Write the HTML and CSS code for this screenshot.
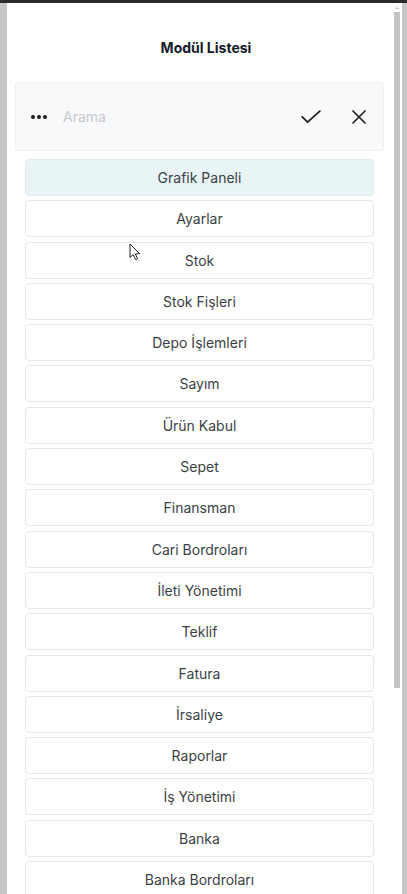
FILE: index.html
```html
<!DOCTYPE html>
<html lang="tr">
<head>
<meta charset="utf-8">
<title>Modül Listesi</title>
<link rel="stylesheet" href="styles.css">
</head>
<body>
<div class="topbar"></div>
<div class="frame">
  <div class="panel">
    <main class="content">
      <h1 class="title">Modül Listesi</h1>
      <div class="search">
        <span class="dots"><i></i><i></i><i></i></span>
        <span class="placeholder">Arama</span>
        <svg class="icon-check" width="20" height="14" viewBox="0 0 20 14"><path d="M1.2 6.8 L6.6 12.2 L18.8 1.2" fill="none" stroke="#222" stroke-width="1.8" stroke-linecap="round" stroke-linejoin="round"/></svg>
        <svg class="icon-x" width="14" height="14" viewBox="0 0 14 14"><path d="M1 1 L13 13 M13 1 L1 13" fill="none" stroke="#222" stroke-width="1.7" stroke-linecap="round"/></svg>
      </div>
      <ul class="list">
        <li class="item active">Grafik Paneli</li>
        <li class="item">Ayarlar</li>
        <li class="item">Stok</li>
        <li class="item">Stok Fişleri</li>
        <li class="item">Depo İşlemleri</li>
        <li class="item">Sayım</li>
        <li class="item">Ürün Kabul</li>
        <li class="item">Sepet</li>
        <li class="item">Finansman</li>
        <li class="item">Cari Bordroları</li>
        <li class="item">İleti Yönetimi</li>
        <li class="item">Teklif</li>
        <li class="item">Fatura</li>
        <li class="item">İrsaliye</li>
        <li class="item">Raporlar</li>
        <li class="item">İş Yönetimi</li>
        <li class="item">Banka</li>
        <li class="item">Banka Bordroları</li>
      </ul>
    </main>
    <div class="scrolltrack">
      <span class="arrow"></span>
      <span class="thumb"></span>
    </div>
  </div>
</div>
<svg class="cursor" width="12" height="18" viewBox="0 0 12 18"><path d="M1 1 L1 14.5 L4.2 11.6 L6.6 16.6 L8.6 15.7 L6.3 10.9 L10.6 10.7 Z" fill="#fff" stroke="#222" stroke-width="1" stroke-linejoin="round"/></svg>
</body>
</html>
```
FILE: styles.css
```css
html, body {
  margin: 0;
  padding: 0;
  height: 894px;
  overflow: hidden;
}
body {
  background: #c6c6c6;
  font-family: Inter, "Noto Sans", "Liberation Sans", sans-serif;
  position: relative;
}
.topbar {
  height: 3px;
  background: #2a2a2a;
}
.frame {
  display: flex;
  height: 891px;
}
.panel {
  flex: 1;
  margin-left: 7px;
  margin-right: 5px;
  background: #fff;
  display: flex;
  overflow: hidden;
}
.content {
  flex: 1;
  min-width: 0;
}
.title {
  margin: 0;
  padding: 36px 0 0 12px;
  text-align: center;
  font-size: 14px;
  font-weight: 700;
  color: #151a2b;
  line-height: 17px;
  box-sizing: border-box;
  height: 79px;
}
.search {
  margin: 0 9px 0 8px;
  height: 69px;
  box-sizing: border-box;
  background: #f8f9fa;
  border: 1px solid #eef0f2;
  border-radius: 3px;
  display: flex;
  align-items: center;
  padding-left: 15px;
}
.dots {
  display: flex;
  gap: 2.2px;
  width: 16px;
}
.dots i {
  display: block;
  width: 4px;
  height: 4px;
  border-radius: 50%;
  background: #1e1e1e;
}
.placeholder {
  margin-left: 16px;
  flex: 1;
  font-size: 14px;
  color: #c5c8ce;
}
.icon-check {
  margin-right: 31px;
}
.icon-x {
  margin-right: 17px;
}
.list {
  list-style: none;
  margin: 8px 19px 0 18px;
  padding: 0;
}
.item {
  height: 37px;
  margin-bottom: 4.3px;
  box-sizing: border-box;
  border: 1px solid #e3e6ea;
  border-radius: 4px;
  display: flex;
  align-items: center;
  justify-content: center;
  font-size: 14px;
  color: #3b3f45;
  background: #fff;
}
.item.active {
  background: #e8f4f6;
  border-color: #dcecef;
}
.scrolltrack {
  width: 9px;
  position: relative;
  flex: none;
}
.thumb {
  position: absolute;
  left: 1px;
  top: 9px;
  width: 6px;
  height: 676px;
  background: #c4c4c4;
}
.arrow {
  position: absolute;
  left: 2px;
  top: 4px;
  width: 0;
  height: 0;
  border-left: 2px solid transparent;
  border-right: 2px solid transparent;
  border-bottom: 2px solid #bdbdbd;
}
.cursor {
  position: absolute;
  left: 129px;
  top: 243px;
}
```
